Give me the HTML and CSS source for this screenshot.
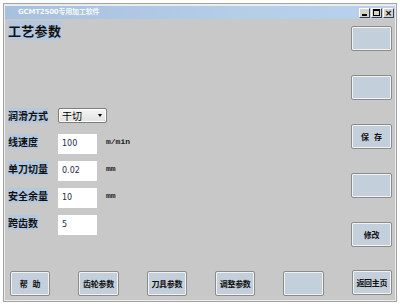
FILE: index.html
```html
<!DOCTYPE html>
<html>
<head>
<meta charset="utf-8">
<link rel="stylesheet" href="styles.css">
</head>
<body>
<div class="window">
  <div class="titlebar">
    <span class="title">GCMT2500专用加工软件</span>
    <div class="controls">
      <span class="ctl ctl-min"></span>
      <span class="ctl ctl-max"></span>
      <span class="ctl ctl-close">×</span>
    </div>
  </div>
  <div class="client">
    <div class="body">
      <div class="main">
        <div class="heading"><span class="hl">工艺参数</span></div>
        <div class="form">
          <div class="row row-combo">
            <span class="label"><span class="hl">润滑方式</span></span>
            <div class="combo"><span class="combo-text">干切</span><span class="arrow"></span></div>
          </div>
          <div class="row">
            <span class="label"><span class="hl">线速度</span></span>
            <div class="input">100</div>
            <span class="unit">m/min</span>
          </div>
          <div class="row">
            <span class="label"><span class="hl">单刀切量</span></span>
            <div class="input">0.02</div>
            <span class="unit">mm</span>
          </div>
          <div class="row">
            <span class="label"><span class="hl">安全余量</span></span>
            <div class="input">10</div>
            <span class="unit">mm</span>
          </div>
          <div class="row">
            <span class="label"><span class="hl">跨齿数</span></span>
            <div class="input">5</div>
          </div>
        </div>
      </div>
      <div class="side">
        <div class="btn"></div>
        <div class="btn"></div>
        <div class="btn btn-spaced">保 存</div>
        <div class="btn"></div>
        <div class="btn">修改</div>
      </div>
    </div>
    <div class="bottom">
      <div class="btn btn-spaced">帮 助</div>
      <div class="btn">齿轮参数</div>
      <div class="btn">刀具参数</div>
      <div class="btn">调整参数</div>
      <div class="btn"></div>
      <div class="btn btn-last">返回主页</div>
    </div>
  </div>
</div>
</body>
</html>
```
FILE: styles.css
```css
html, body {
  margin: 0;
  padding: 0;
  background: #ffffff;
}
body {
  width: 400px;
  height: 307px;
  overflow: hidden;
  font-family: "Noto Sans CJK SC", "Liberation Sans", sans-serif;
}
.window {
  box-sizing: border-box;
  margin: 3px 0 0 3px;
  width: 394px;
  height: 299px;
  border: 1px solid #a4a4a4;
  background: #ececec;
  padding: 2px 1px 1px 1px;
  display: flex;
  flex-direction: column;
}
.titlebar {
  height: 13px;
  flex: none;
  background: linear-gradient(to right, #a6c0de, #b6cde8 60%, #b9d1ec);
  display: flex;
  align-items: center;
  justify-content: space-between;
  padding: 0 1px 0 13px;
}
.title {
  color: #f4f8fc;
  font-family: "DejaVu Sans", "Noto Sans CJK SC", sans-serif;
  font-weight: 700;
  font-size: 7px;
  letter-spacing: -0.2px;
  line-height: 13px;
}
.controls {
  display: flex;
  gap: 1px;
}
.ctl {
  box-sizing: border-box;
  width: 11px;
  height: 10px;
  background: #d6d3ce;
  border: 1px solid;
  border-color: #ffffff #404040 #404040 #ffffff;
  position: relative;
  font-family: "DejaVu Sans", sans-serif;
  font-size: 9px;
  font-weight: 700;
  line-height: 8px;
  text-align: center;
  color: #000;
}
.ctl-min::after {
  content: "";
  position: absolute;
  left: 2px;
  bottom: 1px;
  width: 5px;
  height: 2px;
  background: #000;
}
.ctl-max::after {
  content: "";
  position: absolute;
  left: 1px;
  top: 0px;
  width: 5px;
  height: 4px;
  border: 1px solid #000;
  border-top-width: 2px;
}
.client {
  flex: 1;
  background: #c8c8c8;
  display: flex;
  flex-direction: column;
}
.body {
  flex: 1;
  display: flex;
  justify-content: space-between;
  padding: 0 3px 0 3px;
}
.main {
  padding-top: 5px;
}
.heading {
  font-size: 13px;
  font-weight: 700;
  line-height: 14px;
  color: #111;
  letter-spacing: 0.3px;
}
.hl {
  background: #b3c7de;
}
.form {
  margin-top: 70px;
  display: flex;
  flex-direction: column;
  gap: 7px;
}
.row {
  display: flex;
  align-items: flex-start;
  height: 20px;
}
.row-combo {
  height: 15px;
  margin-bottom: 4px;
  align-items: center;
}
.label {
  width: 50px;
  flex: none;
  font-size: 10px;
  font-weight: 700;
  line-height: 12px;
  color: #111;
  padding-top: 2px;
}
.row-combo .label {
  padding-top: 0;
}
.combo {
  box-sizing: border-box;
  width: 49px;
  height: 15px;
  border: 1px solid #7d7d7d;
  border-radius: 2px;
  background: linear-gradient(#f4f4f4, #e2e2e2);
  display: flex;
  align-items: center;
  justify-content: space-between;
  padding: 0 4px 0 3px;
  box-shadow: inset 0 0 0 1px #ffffff;
}
.combo-text {
  font-size: 10px;
  line-height: 12px;
  color: #000;
}
.arrow {
  width: 0;
  height: 0;
  border-left: 2px solid transparent;
  border-right: 2px solid transparent;
  border-top: 3px solid #000;
}
.input {
  box-sizing: border-box;
  width: 39px;
  height: 20px;
  flex: none;
  background: #ffffff;
  font-family: "DejaVu Sans", sans-serif;
  font-size: 8px;
  line-height: 20px;
  color: #1c2a44;
  padding-left: 4px;
}
.unit {
  margin-left: 9px;
  margin-top: 3px;
  font-family: "Liberation Mono", monospace;
  font-weight: 700;
  font-size: 8px;
  line-height: 9px;
  color: #222;
}
.side {
  padding-top: 7px;
  display: flex;
  flex-direction: column;
  gap: 24px;
}
.btn {
  box-sizing: border-box;
  width: 41px;
  height: 25px;
  border: 1px solid #8c8c8c;
  border-radius: 2px;
  background: #c3cfdb;
  box-shadow: inset 0 0 0 1px #f2f2f2;
  display: flex;
  align-items: center;
  justify-content: center;
  font-size: 8px;
  font-weight: 700;
  color: #111;
  white-space: pre;
  letter-spacing: -0.3px;
}
.btn-spaced {
  letter-spacing: 0;
  word-spacing: 3px;
}
.bottom {
  display: flex;
  gap: 28px;
  padding: 0 3px 4px 5px;
  flex: none;
}
.bottom .btn-last {
  margin-left: auto;
  margin-top: -1px;
}
```
